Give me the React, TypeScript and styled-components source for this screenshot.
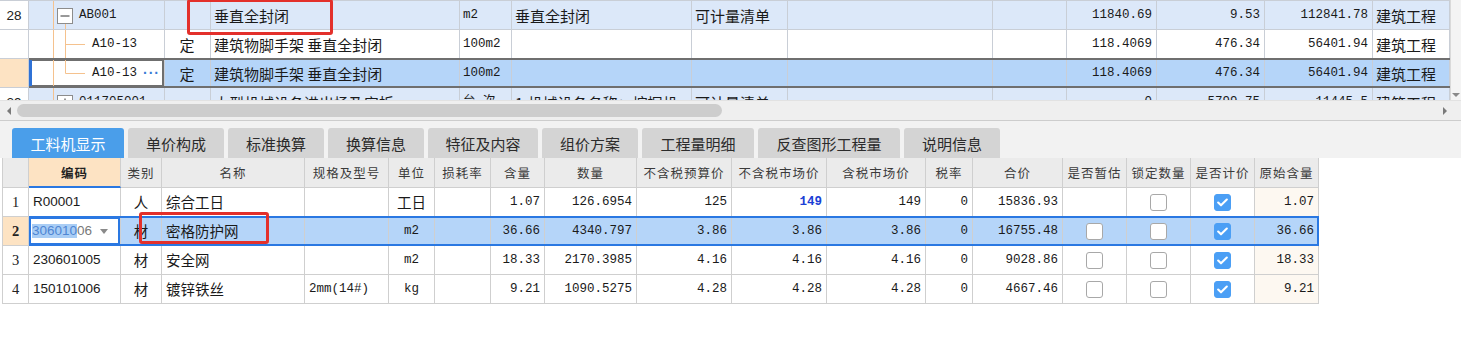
import React from "react";
import styled, { createGlobalStyle, css } from "styled-components";

const GlobalStyle = createGlobalStyle`
  html, body { margin: 0; padding: 0; background: #fff; }
  body { font-family: "Noto Sans CJK SC", "Noto Sans", sans-serif; color: #1a1a1a; }
  * { box-sizing: border-box; }
`;

const CJK = `"Noto Sans CJK SC", "Noto Sans", sans-serif`;
const MONO = `"Liberation Mono", "Noto Sans CJK SC", monospace`;
const SANS = `"Liberation Sans", "Noto Sans CJK SC", sans-serif`;

type Align = "left" | "center" | "right";
type Font = "cjk" | "cjkL" | "mono" | "sans" | "serif";

const fontCss = (f: Font = "cjk") => {
  switch (f) {
    case "mono":
      return css`font-family: ${MONO}; font-size: 12.5px;`;
    case "sans":
      return css`font-family: ${SANS}; font-size: 13.5px;`;
    case "serif":
      return css`font-family: "Liberation Serif", serif; font-size: 14px;`;
    case "cjkL":
      return css`font-family: ${CJK}; font-size: 15px;`;
    default:
      return css`font-family: ${CJK}; font-size: 14.5px;`;
  }
};

const justify = (a: Align = "left") =>
  a === "right" ? "flex-end" : a === "center" ? "center" : "flex-start";

const Page = styled.div`
  position: relative;
  width: 1461px;
  height: 337px;
  overflow: hidden;
  background: #fff;
`;

/* ---------- top grid ---------- */
const TopArea = styled.div`
  display: flex;
  height: 100px;
  overflow: hidden;
`;

const TopGrid = styled.div`
  width: 1450px;
  flex: none;
  display: flex;
  flex-direction: column;
  border-top: 1px solid #c9ced6;
`;

const VScroll = styled.div`
  flex: 1;
  background: #f4f4f4;
  border-left: 1px solid #dadada;
  display: flex;
  flex-direction: column;
  justify-content: flex-end;
  align-items: center;
  padding-bottom: 3px;
`;

const DownTri = styled.span`
  width: 0;
  height: 0;
  border-left: 4px solid transparent;
  border-right: 4px solid transparent;
  border-top: 4px solid #8a8a8a;
`;

type Tone = "plain" | "light" | "sel";
const toneBg = (t: Tone) => (t === "light" ? "#dce8f9" : t === "sel" ? "#b5d5f9" : "#ffffff");

const TRow = styled.div`
  display: flex;
  height: 29px;
  flex: none;
`;

const TRowNum = styled.div<{ $sel?: boolean }>`
  width: 29px;
  flex: none;
  display: flex;
  align-items: center;
  justify-content: center;
  background: ${(p) => (p.$sel ? "#fde3c3" : "#fff")};
  border-right: 1px solid #c9ced6;
  border-bottom: 1px solid #c9ced6;
  font-family: ${SANS};
  font-size: 13.5px;
  color: #222;
`;

const TRowBody = styled.div<{ $tone: Tone }>`
  position: relative;
  display: flex;
  flex: 1;
  background: ${(p) => toneBg(p.$tone)};
  ${(p) =>
    p.$tone === "sel" &&
    css`
      &::after {
        content: "";
        position: absolute;
        left: 0;
        right: 0;
        top: -1px;
        bottom: 0;
        border-top: 2px solid #6f6f6f;
        border-bottom: 2px solid #6f6f6f;
        pointer-events: none;
      }
    `}
`;

const TCell = styled.div<{ $w: number; $align?: Align; $font?: Font; $bg?: string; $focus?: boolean }>`
  width: ${(p) => p.$w}px;
  flex: none;
  display: flex;
  align-items: center;
  justify-content: ${(p) => justify(p.$align)};
  padding: 0 4px 0 3px;
  border-right: 1px solid #c9ced6;
  border-bottom: 1px solid #c9ced6;
  white-space: nowrap;
  overflow: hidden;
  color: #1a1a1a;
  line-height: 1;
  ${(p) => fontCss(p.$font)}
  ${(p) => p.$bg && css`background: ${p.$bg};`}
  ${(p) =>
    p.$focus &&
    css`
      box-shadow: inset 3px 0 0 #2f72d6, inset 0 0 0 2px #6f6f6f;
    `}
`;

const TreeCell = styled(TCell)`
  padding: 0;
`;

const TreeSvg = styled.svg`
  flex: none;
  display: block;
`;

const TreeText = styled.span<{ $gap: number }>`
  margin-left: ${(p) => p.$gap}px;
  font-family: ${MONO};
  font-size: 12.5px;
  color: #1a1a1a;
`;

const Dots = styled.span`
  margin-left: 6px;
  color: #3a7bd5;
  font-family: ${SANS};
  font-size: 14px;
  font-weight: bold;
  letter-spacing: 1px;
`;

type TreeKind = "open" | "closed" | "child" | "last";

const TreeLines = ({ kind }: { kind: TreeKind }) => {
  const boxed = kind === "open" || kind === "closed";
  const w = boxed ? 48 : 60;
  const c = "#f5c28e";
  return (
    <TreeSvg width={w} height={29} viewBox={`0 0 ${w} 29`}>
      <line x1={24.5} y1={0} x2={24.5} y2={29} stroke={c} />
      {boxed ? (
        <>
          {kind === "open" && <line x1={36.5} y1={22} x2={36.5} y2={29} stroke={c} />}
          <rect x={28.5} y={7.5} width={15} height={15} fill="#fff" stroke="#8c8c8c" />
          <line x1={31.5} y1={15} x2={40.5} y2={15} stroke="#333" />
          {kind === "closed" && <line x1={36} y1={10.5} x2={36} y2={19.5} stroke="#333" />}
        </>
      ) : (
        <>
          <line x1={36.5} y1={0} x2={36.5} y2={kind === "last" ? 14.5 : 29} stroke={c} />
          <line x1={36.5} y1={14.5} x2={56} y2={14.5} stroke={c} />
        </>
      )}
    </TreeSvg>
  );
};

const TW = [136, 46, 249, 52, 180, 96, 205, 74, 90, 108, 108, 77];

type TopRowData = {
  num: string;
  tone: Tone;
  tree: TreeKind;
  code: string;
  dots?: boolean;
  cells: string[];
};

const TOP_FONTS: Font[] = ["cjkL", "cjkL", "mono", "cjkL", "cjkL", "mono", "mono", "mono", "mono", "mono", "cjkL"];
const TOP_ALIGN: Align[] = ["center", "left", "left", "left", "left", "right", "right", "right", "right", "right", "left"];

const topRows: TopRowData[] = [
  {
    num: "28",
    tone: "light",
    tree: "open",
    code: "AB001",
    cells: ["", "垂直全封闭", "m2", "垂直全封闭", "可计量清单", "", "", "11840.69", "9.53", "112841.78", "建筑工程"],
  },
  {
    num: "",
    tone: "plain",
    tree: "child",
    code: "A10-13",
    cells: ["定", "建筑物脚手架 垂直全封闭", "100m2", "", "", "", "", "118.4069", "476.34", "56401.94", "建筑工程"],
  },
  {
    num: "",
    tone: "sel",
    tree: "last",
    code: "A10-13",
    dots: true,
    cells: ["定", "建筑物脚手架 垂直全封闭", "100m2", "", "", "", "", "118.4069", "476.34", "56401.94", "建筑工程"],
  },
  {
    num: "29",
    tone: "light",
    tree: "closed",
    code: "011705001···",
    cells: ["", "大型机械设备进出场及安拆", "台·次", "1.机械设备名称：挖掘机", "可计量清单", "", "", "0", "5799.75", "11445.5", "建筑工程"],
  },
];

/* ---------- horizontal scrollbar ---------- */
const HScroll = styled.div`
  height: 21px;
  display: flex;
  align-items: center;
  gap: 6px;
  padding: 0 14px 0 7px;
  background: #efefef;
  border-top: 1px solid #e2e2e2;
  border-bottom: 1px solid #cdcdcd;
`;

const Arrow = styled.span<{ $dir: "left" | "right" }>`
  width: 0;
  height: 0;
  flex: none;
  border-top: 4px solid transparent;
  border-bottom: 4px solid transparent;
  ${(p) =>
    p.$dir === "left"
      ? css`border-right: 4px solid #7a7a7a;`
      : css`border-left: 4px solid #7a7a7a;`}
`;

const Track = styled.div`
  flex: 1;
  height: 13px;
  display: flex;
`;

const Thumb = styled.div`
  width: 705px;
  height: 13px;
  border-radius: 7px;
  background: #cdcdcd;
`;

/* ---------- tabs ---------- */
const TabStrip = styled.div`
  height: 37px;
  background: #f2f2f2;
  display: flex;
  align-items: flex-end;
  gap: 4px;
  padding-left: 12px;
`;

const Tab = styled.div<{ $w: number; $active?: boolean }>`
  width: ${(p) => p.$w}px;
  height: 30px;
  display: flex;
  align-items: center;
  justify-content: center;
  border-radius: 3px 3px 0 0;
  font-family: ${CJK};
  font-size: 15px;
  background: ${(p) => (p.$active ? "#4a9eea" : "#d4d4d4")};
  color: ${(p) => (p.$active ? "#fff" : "#2b2b2b")};
`;

const tabs: [string, number][] = [
  ["工料机显示", 112],
  ["单价构成", 96],
  ["标准换算", 96],
  ["换算信息", 96],
  ["特征及内容", 110],
  ["组价方案", 96],
  ["工程量明细", 112],
  ["反查图形工程量", 142],
  ["说明信息", 96],
];

/* ---------- bottom grid ---------- */
const BottomGrid = styled.div`
  margin-left: 2px;
  width: 1317px;
  display: flex;
  flex-direction: column;
  border-left: 1px solid #cfcfcf;
`;

const BRow = styled.div<{ $h: number }>`
  display: flex;
  height: ${(p) => p.$h}px;
`;

const BRowNum = styled.div<{ $sel?: boolean; $head?: boolean }>`
  width: 26px;
  flex: none;
  display: flex;
  align-items: center;
  justify-content: center;
  border-right: 1px solid #cfcfcf;
  border-bottom: 1px solid #cfcfcf;
  background: ${(p) => (p.$head ? "#ebebeb" : p.$sel ? "#fde3c3" : "#fff")};
  font-family: "Liberation Serif", serif;
  font-size: 14.5px;
  font-weight: ${(p) => (p.$sel ? "bold" : "normal")};
  color: #222;
`;

const BRowBody = styled.div<{ $sel?: boolean }>`
  position: relative;
  display: flex;
  flex: 1;
  background: ${(p) => (p.$sel ? "#b5d5f9" : "#fff")};
  ${(p) =>
    p.$sel &&
    css`
      &::after {
        content: "";
        position: absolute;
        left: 0;
        right: 0;
        top: -1px;
        bottom: 0;
        border: 2px solid #2a78e2;
        border-left: none;
        pointer-events: none;
      }
    `}
`;

const HCell = styled.div<{ $w: number; $key?: boolean }>`
  width: ${(p) => p.$w}px;
  flex: none;
  display: flex;
  align-items: center;
  justify-content: center;
  border-right: 1px solid #cfcfcf;
  border-bottom: 1px solid #cfcfcf;
  background: #ebebeb;
  font-family: ${CJK};
  font-size: 12.5px;
  letter-spacing: 1px;
  color: #3a3a3a;
  white-space: nowrap;
  ${(p) =>
    p.$key &&
    css`
      background: #fde3c3;
      font-weight: bold;
      color: #222;
      border-bottom: 2px solid #2a78e2;
    `}
`;

const BCell = styled.div<{ $w: number; $align?: Align; $font?: Font; $bg?: string; $edit?: boolean }>`
  width: ${(p) => p.$w}px;
  flex: none;
  display: flex;
  align-items: center;
  justify-content: ${(p) => justify(p.$align)};
  padding: 0 4px 0 4px;
  border-right: 1px solid #cfcfcf;
  border-bottom: 1px solid #cfcfcf;
  white-space: nowrap;
  overflow: hidden;
  color: #1a1a1a;
  line-height: 1;
  ${(p) => fontCss(p.$font)}
  ${(p) => p.$bg && css`background: ${p.$bg};`}
  ${(p) =>
    p.$edit &&
    css`
      background: #fff;
      padding-left: 3px;
      box-shadow: inset 0 0 0 2px #2a78e2;
    `}
`;

const BlueBold = styled.span`
  color: #1b3fd6;
  font-weight: bold;
`;

const EditSel = styled.span`
  background: #a9cdf5;
  color: #4f86d3;
`;

const EditRest = styled.span`
  color: #7a7a7a;
`;

const Caret = styled.span`
  margin-left: 8px;
  width: 0;
  height: 0;
  border-left: 4px solid transparent;
  border-right: 4px solid transparent;
  border-top: 5px solid #8a8a8a;
`;

const Box = styled.span<{ $on?: boolean }>`
  width: 17px;
  height: 17px;
  border-radius: 3px;
  display: flex;
  align-items: center;
  justify-content: center;
  background: ${(p) => (p.$on ? "#4b9ff5" : "#fff")};
  border: 1px solid ${(p) => (p.$on ? "#4b9ff5" : "#a8a8a8")};
`;

const Check = ({ on }: { on?: boolean }) => (
  <Box $on={on}>
    {on && (
      <svg width="11" height="9" viewBox="0 0 11 9">
        <polyline points="1.2,4.6 4,7.3 9.8,1.6" fill="none" stroke="#fff" strokeWidth="2.1" strokeLinecap="round" strokeLinejoin="round" />
      </svg>
    )}
  </Box>
);

const BW = [92, 41, 143, 84, 46, 56, 54, 92, 95, 95, 99, 47, 90, 64, 64, 64, 64];
const HEADS = ["编码", "类别", "名称", "规格及型号", "单位", "损耗率", "含量", "数量", "不含税预算价", "不含税市场价", "含税市场价", "税率", "合价", "是否暂估", "锁定数量", "是否计价", "原始含量"];

type BRowData = {
  n: string;
  sel?: boolean;
  code: string;
  kind: string;
  name: string;
  spec: string;
  unit: string;
  unitCjk?: boolean;
  nums: string[];
  est: "none" | "off" | "on";
  lock: boolean;
  price: boolean;
  orig: string;
};

const bRows: BRowData[] = [
  { n: "1", code: "R00001", kind: "人", name: "综合工日", spec: "", unit: "工日", unitCjk: true, nums: ["1.07", "126.6954", "125", "149", "149", "0", "15836.93"], est: "none", lock: false, price: true, orig: "1.07" },
  { n: "2", sel: true, code: "30601006", kind: "材", name: "密格防护网", spec: "", unit: "m2", nums: ["36.66", "4340.797", "3.86", "3.86", "3.86", "0", "16755.48"], est: "off", lock: false, price: true, orig: "36.66" },
  { n: "3", code: "230601005", kind: "材", name: "安全网", spec: "", unit: "m2", nums: ["18.33", "2170.3985", "4.16", "4.16", "4.16", "0", "9028.86"], est: "off", lock: false, price: true, orig: "18.33" },
  { n: "4", code: "150101006", kind: "材", name: "镀锌铁丝", spec: "2mm(14#)", unit: "kg", nums: ["9.21", "1090.5275", "4.28", "4.28", "4.28", "0", "4667.46"], est: "off", lock: false, price: true, orig: "9.21" },
];

/* ---------- annotations ---------- */
const Mark = styled.div<{ $x: number; $y: number; $w: number; $h: number }>`
  position: absolute;
  left: ${(p) => p.$x}px;
  top: ${(p) => p.$y}px;
  width: ${(p) => p.$w}px;
  height: ${(p) => p.$h}px;
  border: 3px solid #e3302b;
  border-radius: 3px;
  pointer-events: none;
`;

export default function App() {
  return (
    <>
      <GlobalStyle />
      <Page>
        <TopArea>
          <TopGrid>
            {topRows.map((r, i) => (
              <TRow key={i}>
                <TRowNum $sel={r.tone === "sel"}>{r.num}</TRowNum>
                <TRowBody $tone={r.tone}>
                  <TreeCell $w={TW[0]} $focus={r.tone === "sel"} $bg={r.tone === "sel" ? "#fff" : undefined}>
                    <TreeLines kind={r.tree} />
                    <TreeText $gap={r.tree === "open" || r.tree === "closed" ? 2 : 3}>{r.code}</TreeText>
                    {r.dots && <Dots>···</Dots>}
                  </TreeCell>
                  {r.cells.map((c, j) => (
                    <TCell key={j} $w={TW[j + 1]} $font={TOP_FONTS[j]} $align={TOP_ALIGN[j]}>
                      {c}
                    </TCell>
                  ))}
                </TRowBody>
              </TRow>
            ))}
          </TopGrid>
          <VScroll>
            <DownTri />
          </VScroll>
        </TopArea>

        <HScroll>
          <Arrow $dir="left" />
          <Track>
            <Thumb />
          </Track>
          <Arrow $dir="right" />
        </HScroll>

        <TabStrip>
          {tabs.map(([t, w], i) => (
            <Tab key={t} $w={w} $active={i === 0}>
              {t}
            </Tab>
          ))}
        </TabStrip>

        <BottomGrid>
          <BRow $h={30}>
            <BRowNum $head />
            <BRowBody>
              {HEADS.map((h, i) => (
                <HCell key={h} $w={BW[i]} $key={i === 0}>
                  {h}
                </HCell>
              ))}
            </BRowBody>
          </BRow>
          {bRows.map((r) => (
            <BRow key={r.n} $h={29}>
              <BRowNum $sel={r.sel}>{r.n}</BRowNum>
              <BRowBody $sel={r.sel}>
                {r.sel ? (
                  <BCell $w={BW[0]} $font="sans" $edit>
                    <EditSel>306010</EditSel>
                    <EditRest>06</EditRest>
                    <Caret />
                  </BCell>
                ) : (
                  <BCell $w={BW[0]} $font="sans">
                    {r.code}
                  </BCell>
                )}
                <BCell $w={BW[1]} $align="center">
                  {r.kind}
                </BCell>
                <BCell $w={BW[2]}>{r.name}</BCell>
                <BCell $w={BW[3]} $font="mono">
                  {r.spec}
                </BCell>
                <BCell $w={BW[4]} $align="center" $font={r.unitCjk ? "cjk" : "mono"}>
                  {r.unit}
                </BCell>
                <BCell $w={BW[5]} />
                {r.nums.map((v, j) => (
                  <BCell key={j} $w={BW[6 + j]} $align="right" $font="mono">
                    {r.n === "1" && j === 3 ? <BlueBold>{v}</BlueBold> : v}
                  </BCell>
                ))}
                <BCell $w={BW[13]} $align="center">
                  {r.est !== "none" && <Check on={r.est === "on"} />}
                </BCell>
                <BCell $w={BW[14]} $align="center">
                  <Check on={r.lock} />
                </BCell>
                <BCell $w={BW[15]} $align="center">
                  <Check on={r.price} />
                </BCell>
                <BCell $w={BW[16]} $align="right" $font="mono" $bg={r.sel ? undefined : "#fdf8f1"}>
                  {r.orig}
                </BCell>
              </BRowBody>
            </BRow>
          ))}
        </BottomGrid>

        <Mark $x={187} $y={-1} $w={146} $h={36} />
        <Mark $x={139} $y={212} $w={130} $h={32} />
      </Page>
    </>
  );
}
